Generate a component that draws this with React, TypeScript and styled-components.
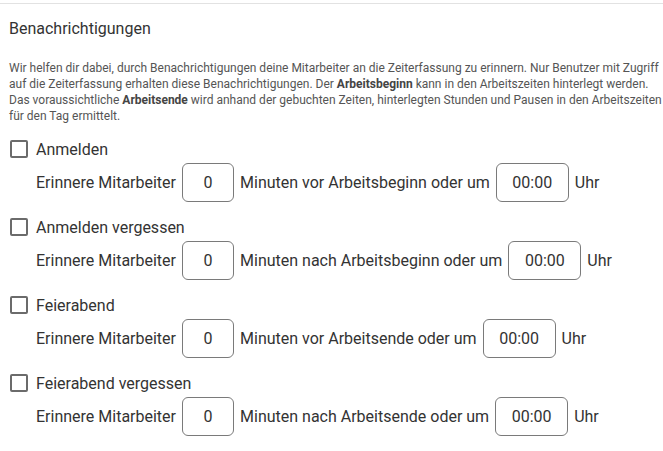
import { FC } from 'react';
import styled, { createGlobalStyle } from 'styled-components';

const GlobalStyle = createGlobalStyle`
	body {
		margin: 0;
		background: #ffffff;
		font-family: Roboto, 'Liberation Sans', Arial, sans-serif;
		color: #333333;
	}
`;

type ReminderType = {
	title: string;
	relation: string;
	time: string;
};

const reminders: ReminderType[] = [
	{ title: 'Anmelden', relation: 'Minuten vor Arbeitsbeginn oder um', time: '00:00' },
	{ title: 'Anmelden vergessen', relation: 'Minuten nach Arbeitsbeginn oder um', time: '00:00' },
	{ title: 'Feierabend', relation: 'Minuten vor Arbeitsende oder um', time: '00:00' },
	{ title: 'Feierabend vergessen', relation: 'Minuten nach Arbeitsende oder um', time: '00:00' },
];

const Reminder: FC<ReminderType> = ({ title, relation, time }) => (
	<Section>
		<SectionHeader>
			<Checkbox type='checkbox' />
			<Label>{title}</Label>
		</SectionHeader>
		<InputRow>
			<span>Erinnere Mitarbeiter</span>
			<Field $width={52} defaultValue='0' />
			<span>{relation}</span>
			<Field $width={73} defaultValue={time} />
			<span>Uhr</span>
		</InputRow>
	</Section>
);

const App: FC = () => (
	<>
		<GlobalStyle />
		<Panel>
			<Title>Benachrichtigungen</Title>
			<Description>
				Wir helfen dir dabei, durch Benachrichtigungen deine Mitarbeiter an die Zeiterfassung zu
				erinnern. Nur Benutzer mit Zugriff auf die Zeiterfassung erhalten diese Benachrichtigungen.
				Der <b>Arbeitsbeginn</b> kann in den Arbeitszeiten hinterlegt werden. Das voraussichtliche{' '}
				<b>Arbeitsende</b> wird anhand der gebuchten Zeiten, hinterlegten Stunden und Pausen in den
				Arbeitszeiten für den Tag ermittelt.
			</Description>
			{reminders.map((r) => (
				<Reminder key={r.title} {...r} />
			))}
		</Panel>
	</>
);

const Panel = styled.div`
	margin-top: 3px;
	border-top: 1px solid #e2e2e2;
	padding: 16px 0 0 9px;
	display: flex;
	flex-direction: column;
`;

const Title = styled.h2`
	margin: 0;
	font-size: 16px;
	line-height: 18px;
	font-weight: 400;
	color: #333333;
`;

const Description = styled.p`
	margin: 22px 0 14px;
	width: 654px;
	font-size: 12px;
	line-height: 16px;
	color: #555555;

	b {
		font-weight: 700;
		color: #444444;
	}
`;

const Section = styled.div`
	display: flex;
	flex-direction: column;
	gap: 3px;
	margin-bottom: 14px;
`;

const SectionHeader = styled.label`
	display: flex;
	align-items: center;
	height: 22px;
`;

const Checkbox = styled.input`
	appearance: none;
	margin: 0 0 0 1px;
	width: 18px;
	height: 18px;
	border: 2px solid #6b6b6b;
	border-radius: 2px;
	background: #fff;
	box-sizing: border-box;
`;

const Label = styled.span`
	margin-left: 8px;
	font-size: 16px;
	color: #333333;
`;

const InputRow = styled.div`
	display: flex;
	align-items: center;
	gap: 6px;
	padding-left: 27px;
	height: 39px;
	font-size: 16px;
	color: #333333;
`;

const Field = styled.input<{ $width: number }>`
	box-sizing: border-box;
	width: ${(p) => p.$width}px;
	height: 39px;
	margin: 0;
	border: 1px solid #7a7a7a;
	border-radius: 6px;
	padding: 0;
	text-align: center;
	font-family: inherit;
	font-size: 16px;
	color: #333333;
	background: #fff;
	outline: none;
`;

export default App;
